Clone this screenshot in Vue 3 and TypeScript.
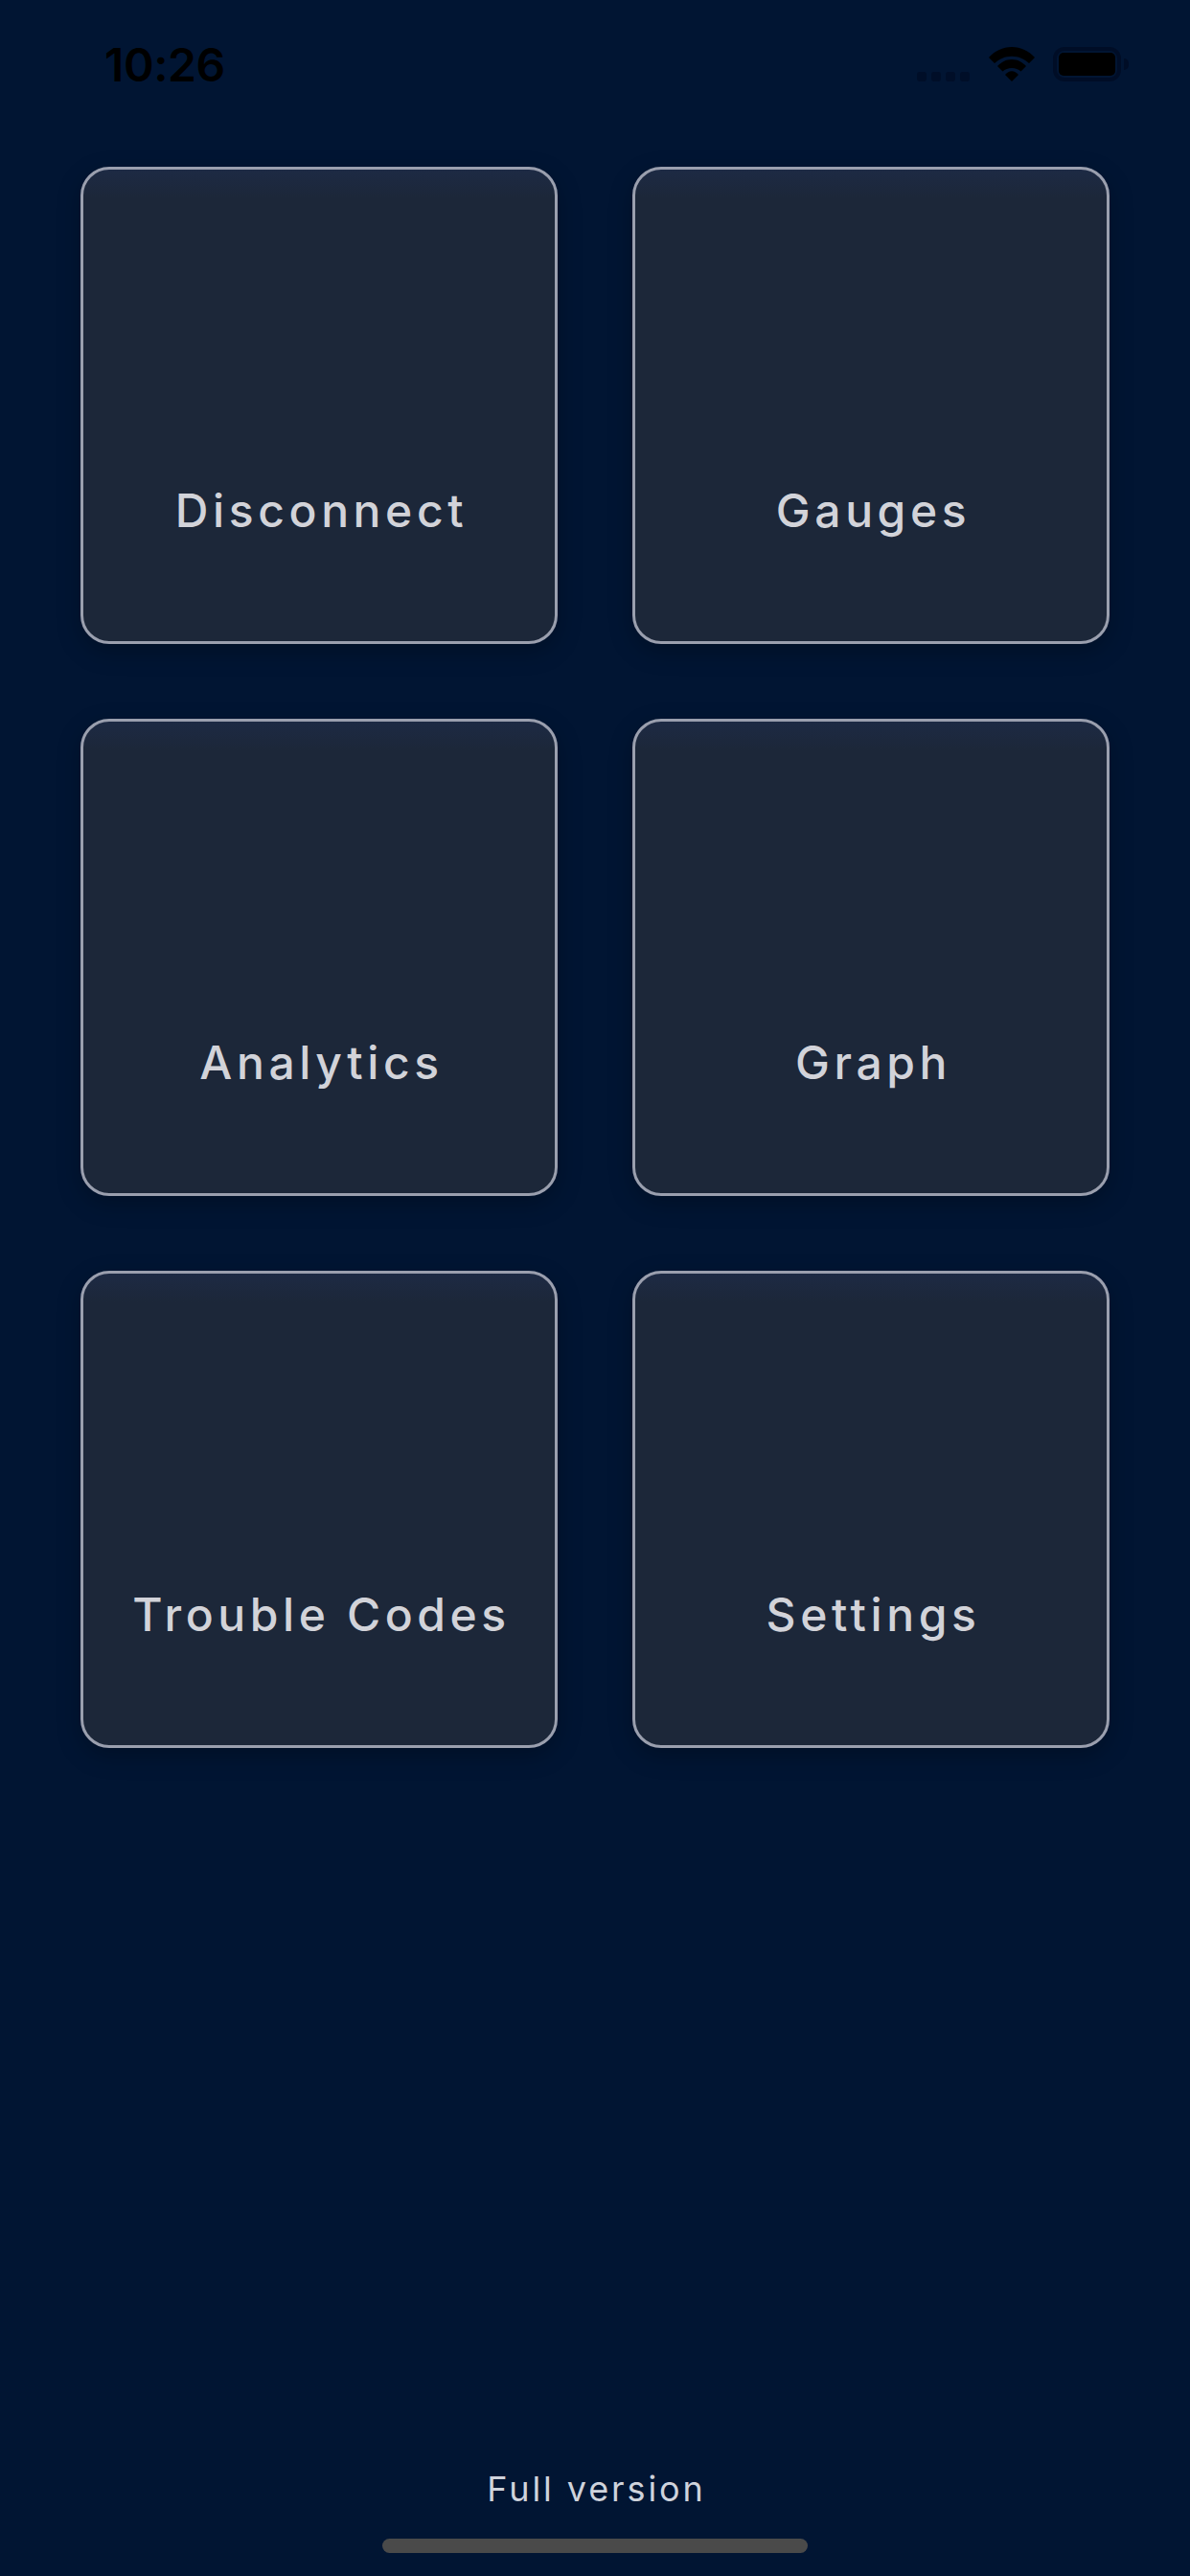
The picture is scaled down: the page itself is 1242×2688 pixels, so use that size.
<template>
  <div class="screen">
    <header class="status-bar">
      <span class="time">10:26</span>
      <div class="status-icons">
        <div class="signal">
          <span v-for="n in 4" :key="n" class="signal-dot"></span>
        </div>
        <svg class="wifi" width="48" height="36" viewBox="0 0 48 36">
          <path d="M0 11 C6.5 4 14.5 0 24 0 C33.5 0 41.5 4 48 11 L42 17 C37 12.5 31 9.7 24 9.7 C17 9.7 11 12.5 6 17 Z" />
          <path d="M9 20 C13 15.8 18 13 24 13 C30 13 35 15.8 39 20 L33.5 25.5 C31 23.5 27.8 22 24 22 C20.2 22 17 23.5 14.5 25.5 Z" />
          <path d="M17 29 C19 26.5 21.5 25.2 24 25.2 C26.5 25.2 29 26.5 31 29 L24 36 Z" />
        </svg>
        <div class="battery">
          <div class="battery-shell"><div class="battery-fill"></div></div>
          <div class="battery-cap"></div>
        </div>
      </div>
    </header>

    <main class="menu">
      <button v-for="item in items" :key="item" type="button" class="menu-card">
        {{ item }}
      </button>
    </main>

    <footer class="footer">
      <span class="version">Full version</span>
      <div class="home-bar"></div>
    </footer>
  </div>
</template>

<script setup lang="ts">
const items: string[] = ['Disconnect', 'Gauges', 'Analytics', 'Graph', 'Trouble Codes', 'Settings']
</script>

<style scoped>
.screen {
  width: 1242px;
  height: 2688px;
  background: #011533;
  display: flex;
  flex-direction: column;
  font-family: Inter, "Liberation Sans", sans-serif;
  overflow: hidden;
}

/* Status bar */
.status-bar {
  height: 174px;
  flex: none;
  display: flex;
  justify-content: space-between;
  align-items: flex-start;
  padding: 39px 64px 0 109px;
  box-sizing: border-box;
}

.time {
  font-size: 48px;
  line-height: 58px;
  font-weight: 600;
  letter-spacing: -0.4px;
  color: #000;
}

.status-icons {
  display: flex;
  align-items: flex-start;
  margin-top: 10px;
}

.signal {
  display: flex;
  gap: 5px;
  margin-top: 26px;
  margin-right: 20px;
}

.signal-dot {
  width: 10px;
  height: 10px;
  border-radius: 3px;
  background: #000e28;
}

.wifi {
  display: block;
  fill: #000;
  margin-right: 19px;
}

.battery {
  display: flex;
  align-items: center;
}

.battery-shell {
  width: 71px;
  height: 36px;
  box-sizing: border-box;
  border: 4px solid #000d26;
  border-radius: 12px;
  padding: 2px;
}

.battery-fill {
  height: 100%;
  background: #000;
  border-radius: 5px;
}

.battery-cap {
  width: 5px;
  height: 12px;
  margin-left: 3px;
  background: #000d26;
  border-radius: 0 6px 6px 0;
}

/* Menu grid */
.menu {
  display: grid;
  grid-template-columns: 498px 498px;
  grid-auto-rows: 498px;
  gap: 78px;
  justify-content: center;
}

.menu-card {
  box-sizing: border-box;
  padding: 0 0 107px 5px;
  display: flex;
  align-items: flex-end;
  justify-content: center;
  background: linear-gradient(#1d2a44, #1c2739 30px);
  border: 3px solid #9a9fae;
  border-radius: 30px;
  box-shadow: 0 8px 24px rgba(0, 0, 0, 0.25);
  color: #d2d3d9;
  font-family: inherit;
  font-size: 48px;
  line-height: 58px;
  font-weight: 500;
  letter-spacing: 4.6px;
}

/* Footer */
.footer {
  margin-top: auto;
  padding-bottom: 24px;
  display: flex;
  flex-direction: column;
  align-items: center;
}

.version {
  padding-left: 3px;
  font-size: 36px;
  line-height: 44px;
  letter-spacing: 2.9px;
  color: #cfd3dc;
}

.home-bar {
  width: 444px;
  height: 15px;
  margin-top: 30px;
  border-radius: 8px;
  background: #4a4a4a;
}
</style>

<style>
html,
body {
  background: #011533;
}
</style>
